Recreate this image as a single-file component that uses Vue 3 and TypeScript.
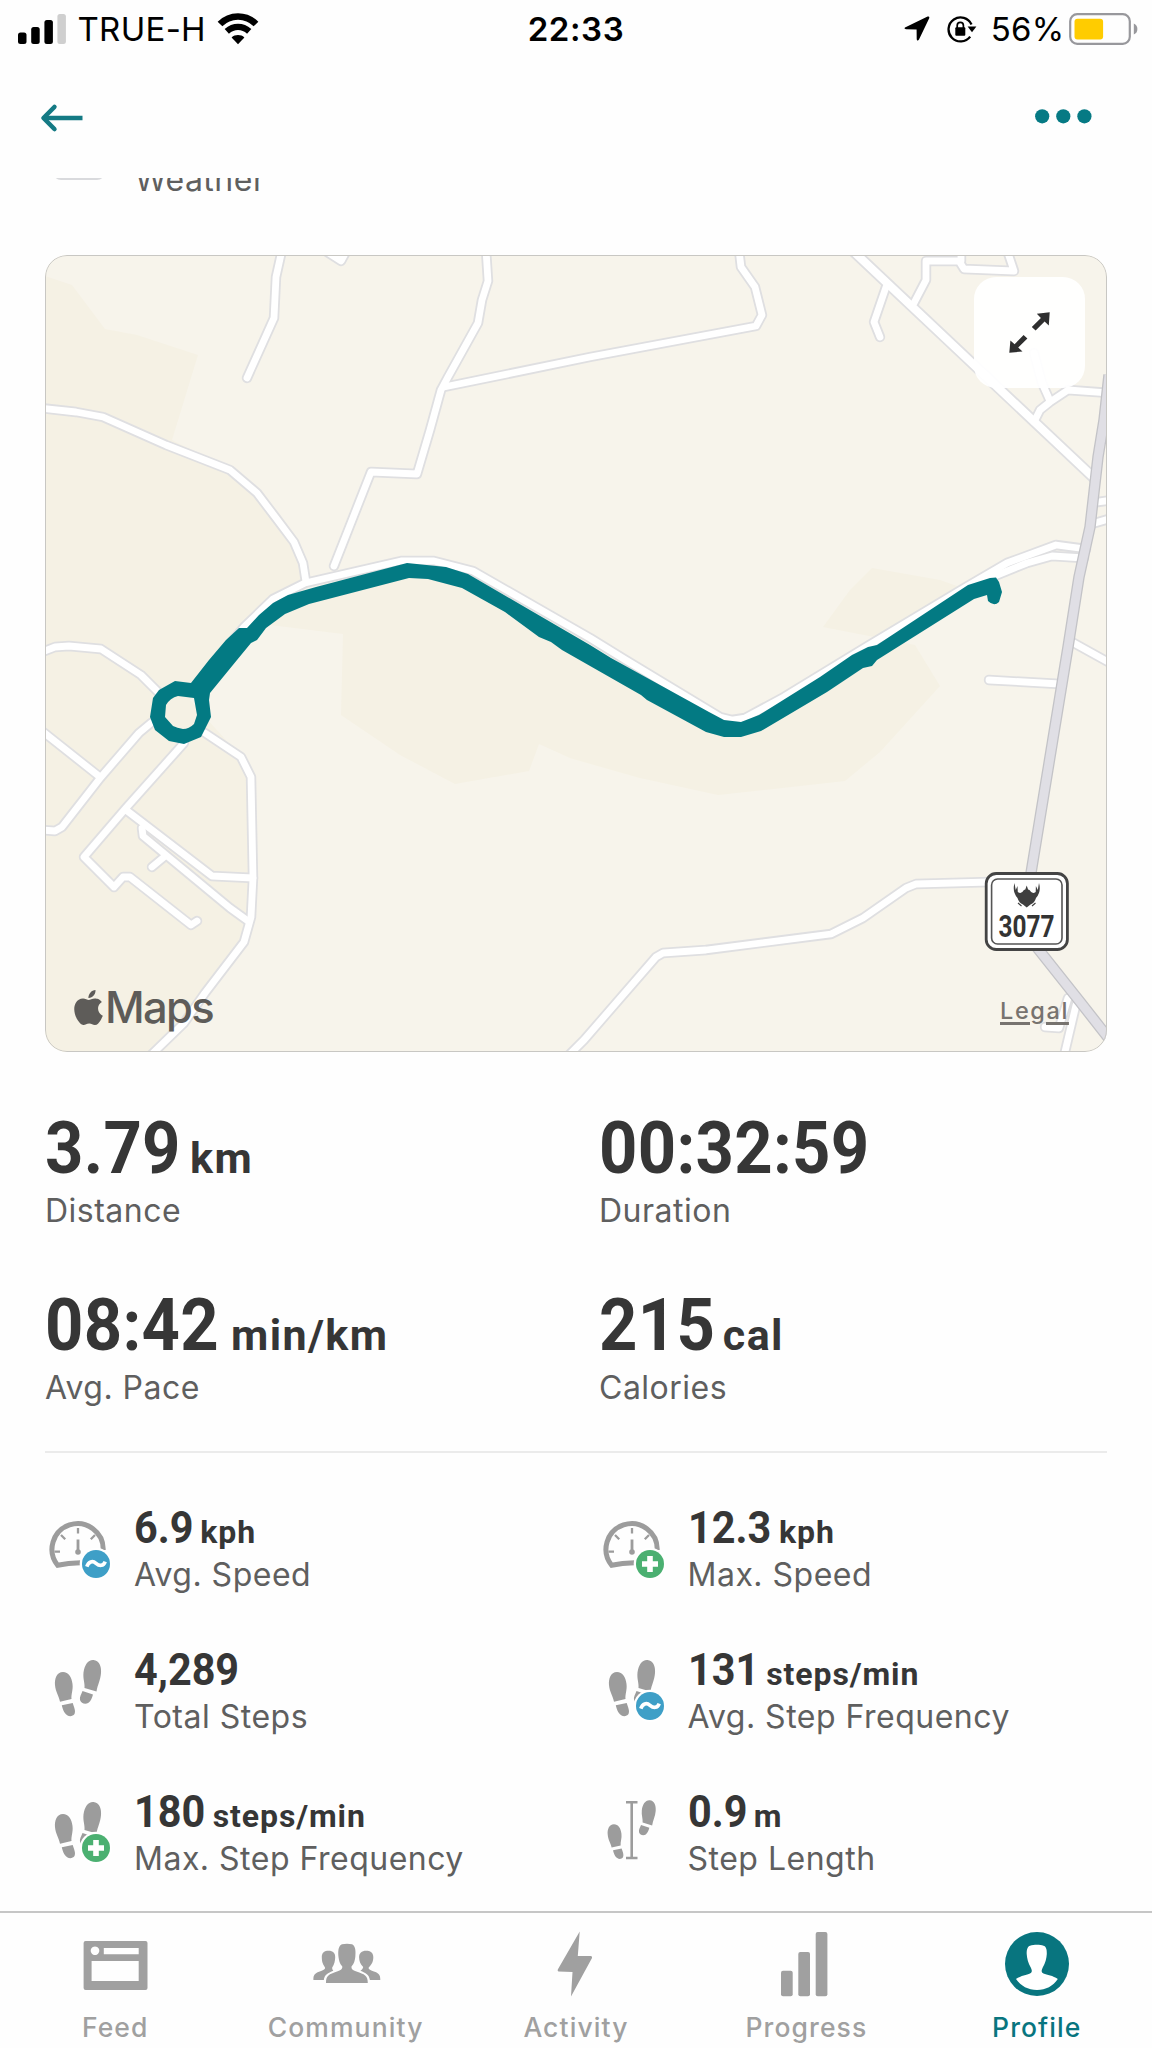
<script setup lang="ts">
interface Metric { value: string; unit: string; label: string }
interface Detail extends Metric { icon: 'gauge' | 'steps' | 'length'; badge?: 'avg' | 'max' }
interface Road { pts: string; w?: number }

const metrics: Metric[] = [
  { value: '3.79', unit: 'km', label: 'Distance' },
  { value: '00:32:59', unit: '', label: 'Duration' },
  { value: '08:42', unit: 'min/km', label: 'Avg. Pace' },
  { value: '215', unit: 'cal', label: 'Calories' },
]

const details: Detail[] = [
  { value: '6.9', unit: 'kph', label: 'Avg. Speed', icon: 'gauge', badge: 'avg' },
  { value: '12.3', unit: 'kph', label: 'Max. Speed', icon: 'gauge', badge: 'max' },
  { value: '4,289', unit: '', label: 'Total Steps', icon: 'steps' },
  { value: '131', unit: 'steps/min', label: 'Avg. Step Frequency', icon: 'steps', badge: 'avg' },
  { value: '180', unit: 'steps/min', label: 'Max. Step Frequency', icon: 'steps', badge: 'max' },
  { value: '0.9', unit: 'm', label: 'Step Length', icon: 'length' },
]

const tabs = ['Feed', 'Community', 'Activity', 'Progress', 'Profile']

const roads: Road[] = [
  { pts: '282,250 276,277 274,318 247,378' },
  { pts: '324,250 341,261 347,250' },
  { pts: '486,250 488,281 482,300 478,323 448,377 441,390 430,430 417,474 371,472 334,566' },
  { pts: '444,387 590,357 756,326 762,315 755,287 741,267 739,250' },
  { pts: '40,408 76,412 103,417 166,445 230,470 257,493 276,518 294,542 303,563 306,582' },
  { pts: '190,692 244,627 273,599 305,583 401,561 434,561 473,571 590,638 624,659 720,717 732,720 745,718 784,697 866,647 966,587 1007,563 1056,545 1086,549' },
  { pts: '985,580 1027,563 1052,556 1084,558' },
  { pts: '852,250 1094,478', w: 8 },
  { pts: '886,287 874,322 880,337' },
  { pts: '914,303 926,280 926,261 959,261 964,269 1014,271 1007,250' },
  { pts: '961,261 961,250' },
  { pts: '1034,353 1042,383 1050,401' },
  { pts: '1110,393 1068,390 1050,402 1040,410 1034,422' },
  { pts: '1112,500 1098,502' },
  { pts: '1112,518 1095,523' },
  { pts: '1072,642 1110,663' },
  { pts: '989,680 1060,684' },
  { pts: '990,882 916,884 906,888 863,918 831,934 706,950 663,953 656,957 584,1040 568,1056' },
  { pts: '1068,998 1059,1028 1045,1027' },
  { pts: '1076,1005 1064,1056' },
  { pts: '42,652 55,647 69,646 101,649 141,675 160,694' },
  { pts: '151,723 139,733 101,777 62,827 55,831 42,830' },
  { pts: '42,731 100,777' },
  { pts: '184,743 126,808 84,857 114,887 123,877 130,877 191,925 197,921' },
  { pts: '126,810 212,876 253,878' },
  { pts: '142,828 143,836 230,908 248,921' },
  { pts: '164,857 152,867' },
  { pts: '205,733 241,757 251,777 253,878 251,917 244,942 205,993 184,1023 150,1056' },
]
const highways = ['1109,375 1104,420 1098,457 1090,527 1079,577 1068,647 1031,873', '1031,940 1081,1003 1110,1040']
</script>

<template>
  <main class="screen">
    <header class="status">
      <div class="status-left">
        <svg class="bars" width="48" height="32" viewBox="0 0 48 32">
          <rect x="0" y="19.5" width="8.5" height="11.5" rx="2.5" />
          <rect x="13.2" y="14" width="8.5" height="17" rx="2.5" />
          <rect x="26.4" y="7" width="8.5" height="24" rx="2.5" />
          <rect x="39.4" y="1" width="8.5" height="30" rx="2.5" fill="#cfcfcf" />
        </svg>
        <span>TRUE-H</span>
        <svg class="wifi" width="42" height="32" viewBox="0 0 42 32">
          <path d="M3 11 C13 .9 29 .9 39 11" fill="none" stroke="#000" stroke-width="6.6" />
          <path d="M9.8 18.4 C16.5 12.4 25.5 12.4 32.2 18.4" fill="none" stroke="#000" stroke-width="6.4" />
          <path d="M14.6 24.4 C18 21.2 24 21.2 27.4 24.4 L21 31.2Z" />
        </svg>
      </div>
      <span class="clock">22:33</span>
      <div class="status-right">
        <svg class="location" width="26" height="25" viewBox="0 0 26 25">
          <path d="M1 11.4 L23.6 .6 Q25.8 0 25.2 2.2 L15 23.6 Q14 25 13.2 24.4 Q12.7 24 12.7 22.8 L12.6 13.4 L2 13.2 Q-.4 12.6 1 11.4Z" />
        </svg>
        <svg class="lock" width="30" height="28" viewBox="0 0 30 28">
          <path d="M24.5 9.5 A12 12 0 1 0 23.2 21.6" fill="none" stroke="#000" stroke-width="2.3" />
          <path d="M20.6 11.5 H29.4 L25 17.2Z" />
          <rect x="8.3" y="12.2" width="10" height="8.6" rx="1" />
          <path d="M10.2 13 V10.4 a3.1 3.1 0 0 1 6.2 0 V13" fill="none" stroke="#000" stroke-width="1.7" />
        </svg>
        <span>56%</span>
        <svg class="battery" width="69" height="32" viewBox="0 0 69 32">
          <rect x="1.2" y="1.2" width="59.6" height="29.6" rx="7" fill="none" stroke="#98989c" stroke-width="2.2" />
          <rect x="5.5" y="5.7" width="28.6" height="20.8" rx="3" fill="#ffcc00" />
          <path d="M64.8 10.5 Q68.4 12 68.4 16 T64.8 21.5Z" fill="#98989c" />
        </svg>
      </div>
    </header>

    <nav class="nav">
      <svg width="46" height="30" viewBox="0 0 46 30" fill="none" stroke="#147a84" stroke-width="4.6" stroke-linecap="round" stroke-linejoin="round">
        <path d="M15.4 4 L4.5 15 L15.4 26" /><path d="M5 15 H43.5" stroke-linecap="butt" />
      </svg>
      <svg class="more" width="57" height="15" viewBox="0 0 57 15" fill="#067a84">
        <circle cx="7.2" cy="7.3" r="7.1" /><circle cx="28.3" cy="7.3" r="7.1" /><circle cx="49.4" cy="7.3" r="7.1" />
      </svg>
    </nav>

    <section class="weather">
      <i class="weather-icon"></i>
      <span class="label">Weather</span>
    </section>

    <section class="map">
      <svg width="1062" height="797" viewBox="45 255 1062 797">
        <rect x="45" y="255" width="1062" height="797" fill="#f7f4eb" />
        <g fill="#f5f1e4">
          <path d="M45 276 L72 285 L105 329 L137 335 L198 355 L172 440 L230 470 L276 518 L303 563 L305 583 L244 627 L190 700 L241 757 L251 777 L253 878 L244 942 L184 1023 L150 1052 H45Z" />
          <path d="M343 634 L341 715 L400 755 L455 784 L529 771 L539 744 L570 758 L640 778 L718 795 L845 781 L880 752 L940 686 L915 645 L823 627 L850 590 L872 568 L940 580 L968 590 L735 735 L590 650 L440 572 L300 598 L270 625Z" />
        </g>
        <g fill="none" stroke="#dfdfe1" stroke-linecap="round" stroke-linejoin="round">
          <polyline v-for="r in roads" :key="r.pts" :points="r.pts" :stroke-width="(r.w ?? 6.8) + 3.6" />
        </g>
        <g fill="none" stroke="#fff" stroke-linecap="round" stroke-linejoin="round">
          <polyline v-for="r in roads" :key="r.pts" :points="r.pts" :stroke-width="r.w ?? 6.8" />
        </g>
        <g fill="none" stroke-linejoin="round">
          <polyline v-for="h in highways" :key="h" :points="h" stroke="#c3c3c7" stroke-width="11.4" />
          <polyline v-for="h in highways" :key="h" :points="h" stroke="#e0dfe5" stroke-width="8.8" />
        </g>
        <path fill="#037a83" fill-rule="evenodd" d="M191 683 L209 660 L226 640 L239 628 L247 628 L259 615 L273 603 L288 595 L316 587 L407 563 L446 567 L468 574 L590 645 L611 658 L709 712 L724 720 L741 722 L759 715 L820 677 L852 655 L868 647 L877 645 L927 612 L968 585 L990 578 L996 577.5 L999 582 L1002 592 L999 602 Q994 607 988 601 L987 595 L974 599 L877 660 L872 666 L863 668 L827 692 L761 731 L741 737 H724 L706 732 L647 700 L641 695 L562 650 L551 642 L539 637 L505 612 L462 588 L428 579 L409 578 L309 604 L285 614 L266 628 L257 640 L251 643 L237 660 L210 693 L209 700 L211 717 L201 737 L184 744 L169 741 L155 730 L150 717 L153 698 L159 690 L175 681Z M178 696 L194 698 L197 715 L194 724 Q189 729 183 729 Q177 728 173 726 L165 717 L166 705 Q170 698 178 696Z" />
        <rect x="986.2" y="873.5" width="81.2" height="76" rx="10" fill="#fff" stroke="#444" stroke-width="2.8" />
        <rect x="991.6" y="879" width="70.4" height="65" rx="6" fill="#fff" stroke="#555" stroke-width="1.6" />
        <g transform="translate(3.5 0)">
          <path fill="#3f3f3f" d="M1011 883 Q1008.5 892 1014 898 Q1015.5 903 1019.5 904.5 L1023.2 907.5 L1027 904.5 Q1031 903 1032.5 898 Q1038 892 1035.5 883 L1034.3 890 L1032.4 886 L1032.2 892 Q1028.5 894.5 1026 890 L1024.6 889.5 L1023.2 885.5 L1021.8 889.5 L1020.4 890 Q1018 894.5 1014.3 892 L1014 886 L1012.2 890Z" />
          <path fill="none" stroke="#3f3f3f" stroke-width="1.1" d="M1014.5 903 L1018 906 M1032 903 L1028.5 906" />
        </g>
        <text class="road-no" x="998.5" y="937.3" textLength="56" lengthAdjust="spacingAndGlyphs">3077</text>
      </svg>
      <button class="expand" type="button" aria-label="Expand map">
        <svg width="41" height="41" viewBox="1009 312.5 41 41" fill="#2f2f2f">
          <path d="M1049.7 312.7 L1036.8 314.3 L1040.9 318.5 L1031.8 327.6 L1035.6 331 L1044.6 322 L1048.8 325.9Z M1009.3 353.3 L1010.4 341 L1014.6 344.7 L1023.6 335.5 L1027.4 339 L1018.2 348 L1022.5 351.9Z" />
        </svg>
      </button>
      <div class="brand">
        <svg width="29" height="35" viewBox="2.2 0 19.6 24" fill="#5e5c59">
          <path d="M12.152 6.896c-.948 0-2.415-1.078-3.96-1.04-2.04.027-3.91 1.183-4.961 3.014-2.117 3.675-.546 9.103 1.519 12.09 1.013 1.454 2.208 3.09 3.792 3.039 1.52-.065 2.09-.987 3.935-.987 1.831 0 2.35.987 3.96.948 1.637-.026 2.676-1.48 3.676-2.948 1.156-1.688 1.636-3.325 1.662-3.415-.039-.013-3.182-1.221-3.22-4.857-.026-3.04 2.48-4.494 2.597-4.559-1.429-2.09-3.623-2.324-4.39-2.376-2-.156-3.675 1.09-4.61 1.09zM15.53 3.83c.843-1.012 1.4-2.427 1.245-3.83-1.207.052-2.662.805-3.532 1.818-.78.896-1.454 2.338-1.273 3.714 1.338.104 2.715-.688 3.559-1.701" />
        </svg>
        <span>Maps</span>
      </div>
      <a class="legal">Legal</a>
    </section>

    <section class="metrics">
      <div v-for="m in metrics" :key="m.label" class="metric">
        <div class="figure"><span class="value">{{ m.value }}</span><span class="unit">{{ m.unit }}</span></div>
        <div class="label">{{ m.label }}</div>
      </div>
    </section>

    <section class="details">
      <div v-for="d in details" :key="d.label" class="detail">
        <svg class="detail-icon" width="89" height="86" viewBox="0 0 89 86" fill="#9c9c9c">
          <g v-if="d.icon === 'gauge'" fill="none" stroke="#9c9c9c">
            <path d="M35.5 53.7 Q23 53.8 12.6 56.2 A25.6 25.6 0 1 1 58.2 41" stroke-width="5" />
            <path d="M33 19 V24.6 M9.5 42.7 H15 M16 26 L20.2 30.2 M50 26 L45.8 30.2" stroke-width="2.3" />
            <path d="M33 30.5 V43" stroke-width="2.8" />
            <circle cx="33" cy="43" r="1.4" stroke-width="2.8" />
          </g>
          <g v-else-if="d.icon === 'steps'">
            <path d="M18 21 C11.5 21 9.5 28 10 34 C10.5 41 14 45 15 50.7 L26.5 48 C26 43 28.3 39 27.5 33 C26.8 26 23.5 21 18 21Z M16.8 54.2 L27.7 52 C29 56 31 60 29.5 63 C27 66.5 22 65.5 19.5 61.5 C18 59 17.3 56.5 16.8 54.2Z" />
            <path d="M48.5 9 C54 9.5 56.5 15 56 22 C55.5 29 52.5 34 51.5 40.5 L39.5 37 C40 32 37.8 28 38.5 21.5 C39.5 14 43 8.6 48.5 9Z M37.5 40 L48 43.5 C47 47 46 50 43.5 51.8 C40.5 54 36 52.5 35 49 C34.3 46 36.5 43 37.5 40Z" />
          </g>
          <g v-else>
            <path transform="translate(.85 14.8) scale(.785)" d="M18 21 C11.5 21 9.5 28 10 34 C10.5 41 14 45 15 50.7 L26.5 48 C26 43 28.3 39 27.5 33 C26.8 26 23.5 21 18 21Z M16.8 54.2 L27.7 52 C29 56 31 60 29.5 63 C27 66.5 22 65.5 19.5 61.5 C18 59 17.3 56.5 16.8 54.2Z" />
            <path transform="translate(12.2 .2) scale(.795)" d="M48.5 9 C54 9.5 56.5 15 56 22 C55.5 29 52.5 34 51.5 40.5 L39.5 37 C40 32 37.8 28 38.5 21.5 C39.5 14 43 8.6 48.5 9Z M37.5 40 L48 43.5 C47 47 46 50 43.5 51.8 C40.5 54 36 52.5 35 49 C34.3 46 36.5 43 37.5 40Z" />
            <path d="M27 9.3 H38.5 M27 65 H38.5 M32.7 9 V65" fill="none" stroke="#9c9c9c" stroke-width="2.6" />
          </g>
          <template v-if="d.badge">
            <circle cx="51" cy="55" r="16.3" fill="#fff" />
            <circle cx="51" cy="55" r="14" :fill="d.badge === 'avg' ? '#3e9fc7' : '#4bb071'" />
            <path v-if="d.badge === 'avg'" d="M41.8 57.6 C43.5 52.6 47.5 51.3 51 54.3 C54.5 57.3 58.5 57.3 60.2 52.6" fill="none" stroke="#fff" stroke-width="3.6" />
            <path v-else d="M51 47 V63 M43 55 H59" fill="none" stroke="#fff" stroke-width="5.6" />
          </template>
        </svg>
        <div>
          <div class="figure"><span class="value">{{ d.value }}</span><span class="unit">{{ d.unit }}</span></div>
          <div class="label">{{ d.label }}</div>
        </div>
      </div>
    </section>

    <footer class="tabs">
      <div v-for="t in tabs" :key="t" class="tab" :class="{ active: t === 'Profile' }">
        <svg width="80" height="80" viewBox="0 0 80 80" fill="currentColor">
          <path v-if="t === 'Feed'" fill-rule="evenodd" d="M10.6 16 H70.5 Q72.5 16 72.5 18 V63 Q72.5 65 70.5 65 H10.6 Q8.6 65 8.6 63 V18 Q8.6 16 10.6 16Z M20 21.4 a4.3 4.3 0 1 0 .01 0Z M28.8 23 V29.3 H63.7 V23Z M16.6 36 V56 H63.7 V36Z" />
          <g v-else-if="t === 'Community'">
            <path d="M20 58 C20 50 23 49.5 31 46.5 C35 45 36.5 44 36.3 41.5 C33.5 38.5 33 35.5 32.5 32 C32 27 32 21 36 19.3 C39 18.4 43 18.4 46 19.3 C49.8 21 49.8 27 49.3 32 C48.8 35.5 48.3 38.5 45.5 41.5 C45.3 44 46.5 45 50.5 46.5 C58.5 49.5 61.8 50 61.8 58Z" />
            <path d="M7.4 55 C7.3 49.5 9 48.5 13 46.8 C17 45.2 19.5 44.5 19 42.5 C16 38.5 15.8 35 15.8 32 C15.8 27.5 18.5 25.7 22.6 25.7 C27 25.7 29.4 28 29.2 32.5 C29 36 28.5 39 26.2 42.5 C26 44 26.7 45 27.3 45.7 C22 48 18.5 49.5 17.8 55Z" />
            <path transform="translate(81.7 0) scale(-1 1)" d="M7.4 55 C7.3 49.5 9 48.5 13 46.8 C17 45.2 19.5 44.5 19 42.5 C14.8 38.5 14.4 35 14.4 32 C14.4 27.5 17.5 25.7 21.6 25.7 C26 25.7 28.7 28 28.6 32.5 C28.5 36 27.5 39 24.5 42 C25 44 25.7 45 27.3 45.7 C22 48 18.5 49.5 17.8 55Z" />
          </g>
          <path v-else-if="t === 'Activity'" d="M43.7 6.5 L41.8 31 L55 31 Q56.5 31.5 56 33 L35 71.5 L36.5 47 L22.5 46.5 Q21.2 46 21.8 44.5Z" />
          <g v-else-if="t === 'Progress'">
            <rect x="15" y="45.7" width="11.7" height="25.5" rx="2" /><rect x="32.3" y="27" width="11.7" height="44.2" rx="2" /><rect x="49.7" y="7" width="11.7" height="64.2" rx="2" />
          </g>
          <g v-else>
            <circle cx="40" cy="39" r="32" />
            <path fill="#fff" d="M19 54 C24 50.5 30 50 33 48.5 C35.5 47.2 35 45.5 34 43 C31 38 30 33 29.7 29 C29.5 23.5 31 21.5 33 20.7 C37 19.5 43 19.5 46.5 20.7 C48.8 21.5 50 23.5 49.8 29 C49.5 33 48.5 38 45.5 43 C44.5 45.5 44 47.2 46.5 48.5 C50 50 56 50.5 60.8 54 C56 61 49 65 40 65 C31 65 24 61 19 54Z" />
          </g>
        </svg>
        <span>{{ t }}</span>
      </div>
    </footer>
  </main>
</template>

<style>
body { background: #fff; }
</style>

<style scoped>
.screen { width: 1152px; height: 2048px; overflow: hidden; box-sizing: border-box; display: flex; flex-direction: column; background: #fefefe; font-family: Inter, "Liberation Sans", sans-serif; color: #363636; }
svg { display: block; flex: none; }

.status { height: 58px; flex: none; display: grid; grid-template-columns: 1fr auto 1fr; align-items: center; color: #000; font-size: 33px; line-height: 58px; letter-spacing: .3px; }
.status-left { display: flex; align-items: center; padding-left: 18px; gap: 11.5px; }
.status-right { display: flex; align-items: center; justify-content: flex-end; padding-right: 14px; }
.clock { font-weight: 600; letter-spacing: .6px; }
.location { margin-top: -1px; }
.lock { margin: 0 14px 0 17px; }
.battery { margin-left: 4.5px; }

.nav { height: 120px; flex: none; box-sizing: border-box; display: flex; justify-content: space-between; align-items: flex-start; padding: 45px 60px 0 39px; }
.more { margin-top: 6px; }

.weather { height: 77px; flex: none; display: flex; overflow: hidden; align-items: flex-start; padding-left: 53px; }
.weather-icon { width: 52px; height: 20px; box-sizing: border-box; margin: -18px 30px 0 0; border-bottom: 2px solid #d9dadd; border-radius: 0 0 8px 8px; }
.weather .label { margin-top: -18.5px; letter-spacing: .5px; }

.map { position: relative; width: 1062px; height: 797px; flex: none; margin-left: 45px; border-radius: 22px; overflow: hidden; }
.map::after { content: ""; position: absolute; inset: 0; border: 1.5px solid #c8c7c3; border-radius: 22px; pointer-events: none; }
.road-no { font: 700 31px Roboto, sans-serif; fill: #333; }
.expand { position: absolute; top: 22px; right: 22px; width: 111px; height: 111px; border: 0; border-radius: 22px; padding: 0; background: rgba(255, 255, 255, .94); display: flex; align-items: center; justify-content: center; }
.brand { position: absolute; left: 29px; bottom: 19px; height: 52px; display: flex; align-items: center; color: #5e5c59; font-size: 43.5px; line-height: 52px; font-weight: 500; letter-spacing: -1.7px; }
.brand svg { margin-right: 2px; }
.legal { position: absolute; left: 955px; top: 739px; color: #77736f; font-size: 23.5px; line-height: 34px; font-weight: 500; letter-spacing: 1.6px; text-decoration: underline; text-decoration-thickness: 2.5px; text-underline-offset: 3px; }

.label { font-size: 32px; line-height: 40px; letter-spacing: .5px; color: #5f5f5f; white-space: nowrap; }
.figure { font-family: Roboto, sans-serif; font-weight: 700; display: flex; align-items: baseline; white-space: nowrap; color: #363636; }
.value { display: inline-block; transform-origin: 0 50%; }

.metrics { flex: none; display: grid; grid-template-columns: 554px 1fr; row-gap: 65px; margin: 0 45px; padding: 67px 0 43px; border-bottom: 2px solid #ebebeb; }
.metric .figure { height: 60px; line-height: 60px; margin-bottom: 12px; }
.metric .value { font-size: 72px; letter-spacing: .3px; transform: scaleX(.93); }
.metric .unit { font-size: 43px; letter-spacing: 1.4px; margin-left: -1px; }

.details { flex: none; display: grid; grid-template-columns: 553.5px 1fr; row-gap: 56px; margin: 0 45px; padding-top: 56px; }
.detail { display: flex; height: 86px; }
.detail .figure { height: 40px; line-height: 40px; margin: -1px 0 7px; }
.detail .value { font-size: 44px; transform: scaleX(.94); }
.detail .unit { font-size: 32px; letter-spacing: .9px; margin-left: 3px; }

.tabs { margin-top: auto; height: 137px; box-sizing: border-box; flex: none; border-top: 2px solid #c6c6c6; display: grid; grid-template-columns: repeat(5, 1fr); }
.tab { display: flex; flex-direction: column; align-items: center; padding-top: 12px; color: #a0a0a0; font-size: 26.5px; line-height: 34px; font-weight: 500; letter-spacing: 1.1px; }
.tab svg { margin-bottom: 5px; }
.tab.active { color: #08757f; }
</style>
